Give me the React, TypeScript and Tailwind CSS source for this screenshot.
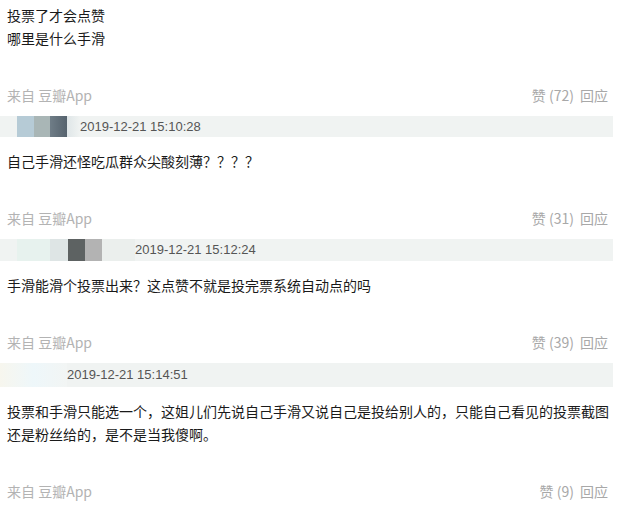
const comments = [
  {
    lines: ["投票了才会点赞", "哪里是什么手滑"],
    likes: 72,
    date: "2019-12-21 15:10:28",
    barH: "h-[21px]",
    avatar: (
      <div className="flex h-full ml-[17px] w-[63px]">
        <div className="w-[17px] h-full bg-[#b6cbd6]" />
        <div className="w-[16px] h-full bg-[#a9b6b6]" />
        <div className="w-[17px] h-full bg-gradient-to-r from-[#6f7d87] to-[#56636e]" />
        <div className="w-[13px] h-full bg-gradient-to-r from-[#dfe6e8] to-transparent" />
      </div>
    ),
  },
  {
    lines: ["自己手滑还怪吃瓜群众尖酸刻薄？？？？"],
    likes: 31,
    date: "2019-12-21 15:12:24",
    barH: "h-[22px]",
    avatar: (
      <div className="flex h-full ml-[17px] w-[118px]">
        <div className="w-[33px] h-full bg-[#e7f2ee]" />
        <div className="w-[18px] h-full bg-[#dee5e5]" />
        <div className="w-[17px] h-full bg-[#5d6262]" />
        <div className="w-[17px] h-full bg-[#b3b3b3]" />
        <div className="w-[33px] h-full bg-[#ebefed]" />
      </div>
    ),
  },
  {
    lines: ["手滑能滑个投票出来？这点赞不就是投完票系统自动点的吗"],
    likes: 39,
    date: "2019-12-21 15:14:51",
    barH: "h-[24px]",
    avatar: (
      <div className="h-full w-[67px] bg-gradient-to-r from-[#f7f6ee] via-[#eef7fa] to-[#f2f5f4]" />
    ),
  },
  {
    lines: [
      "投票和手滑只能选一个，这姐儿们先说自己手滑又说自己是投给别人的，只能自己看见的投票截图",
      "还是粉丝给的，是不是当我傻啊。",
    ],
    likes: 9,
    date: "",
    barH: "",
    avatar: null,
  },
];

export default function App() {
  return (
    <div className="w-[624px] h-[505px] overflow-hidden bg-white font-['Noto_Sans_CJK_SC','Microsoft_YaHei',sans-serif] pt-[4px]">
      {comments.map((c, i) => (
        <div key={i} className="flex flex-col">
          <div className="pl-[7px] text-[14px] leading-[23px] text-[#1a1a1a] whitespace-nowrap">
            {c.lines.map((l, j) => (
              <p key={j}>{l}</p>
            ))}
          </div>
          <div className="mt-[35px] flex h-[20px] items-center justify-between pl-[7px] pr-[16px] text-[14px] leading-[20px]">
            <span className="text-[#b3b3b3]">来自 豆瓣App</span>
            <span className="flex gap-[6px] text-[#a8a8a8]">
              <span>赞 ({c.likes})</span>
              <span>回应</span>
            </span>
          </div>
          {c.date && (
            <div
              className={`mt-[11px] mb-[13px] mr-[11px] flex items-center bg-[#f0f3f2] ${c.barH}`}
            >
              {c.avatar}
              <span className="font-['Liberation_Sans',Arial,sans-serif] text-[13px] text-[#555]">
                {c.date}
              </span>
            </div>
          )}
        </div>
      ))}
    </div>
  );
}
